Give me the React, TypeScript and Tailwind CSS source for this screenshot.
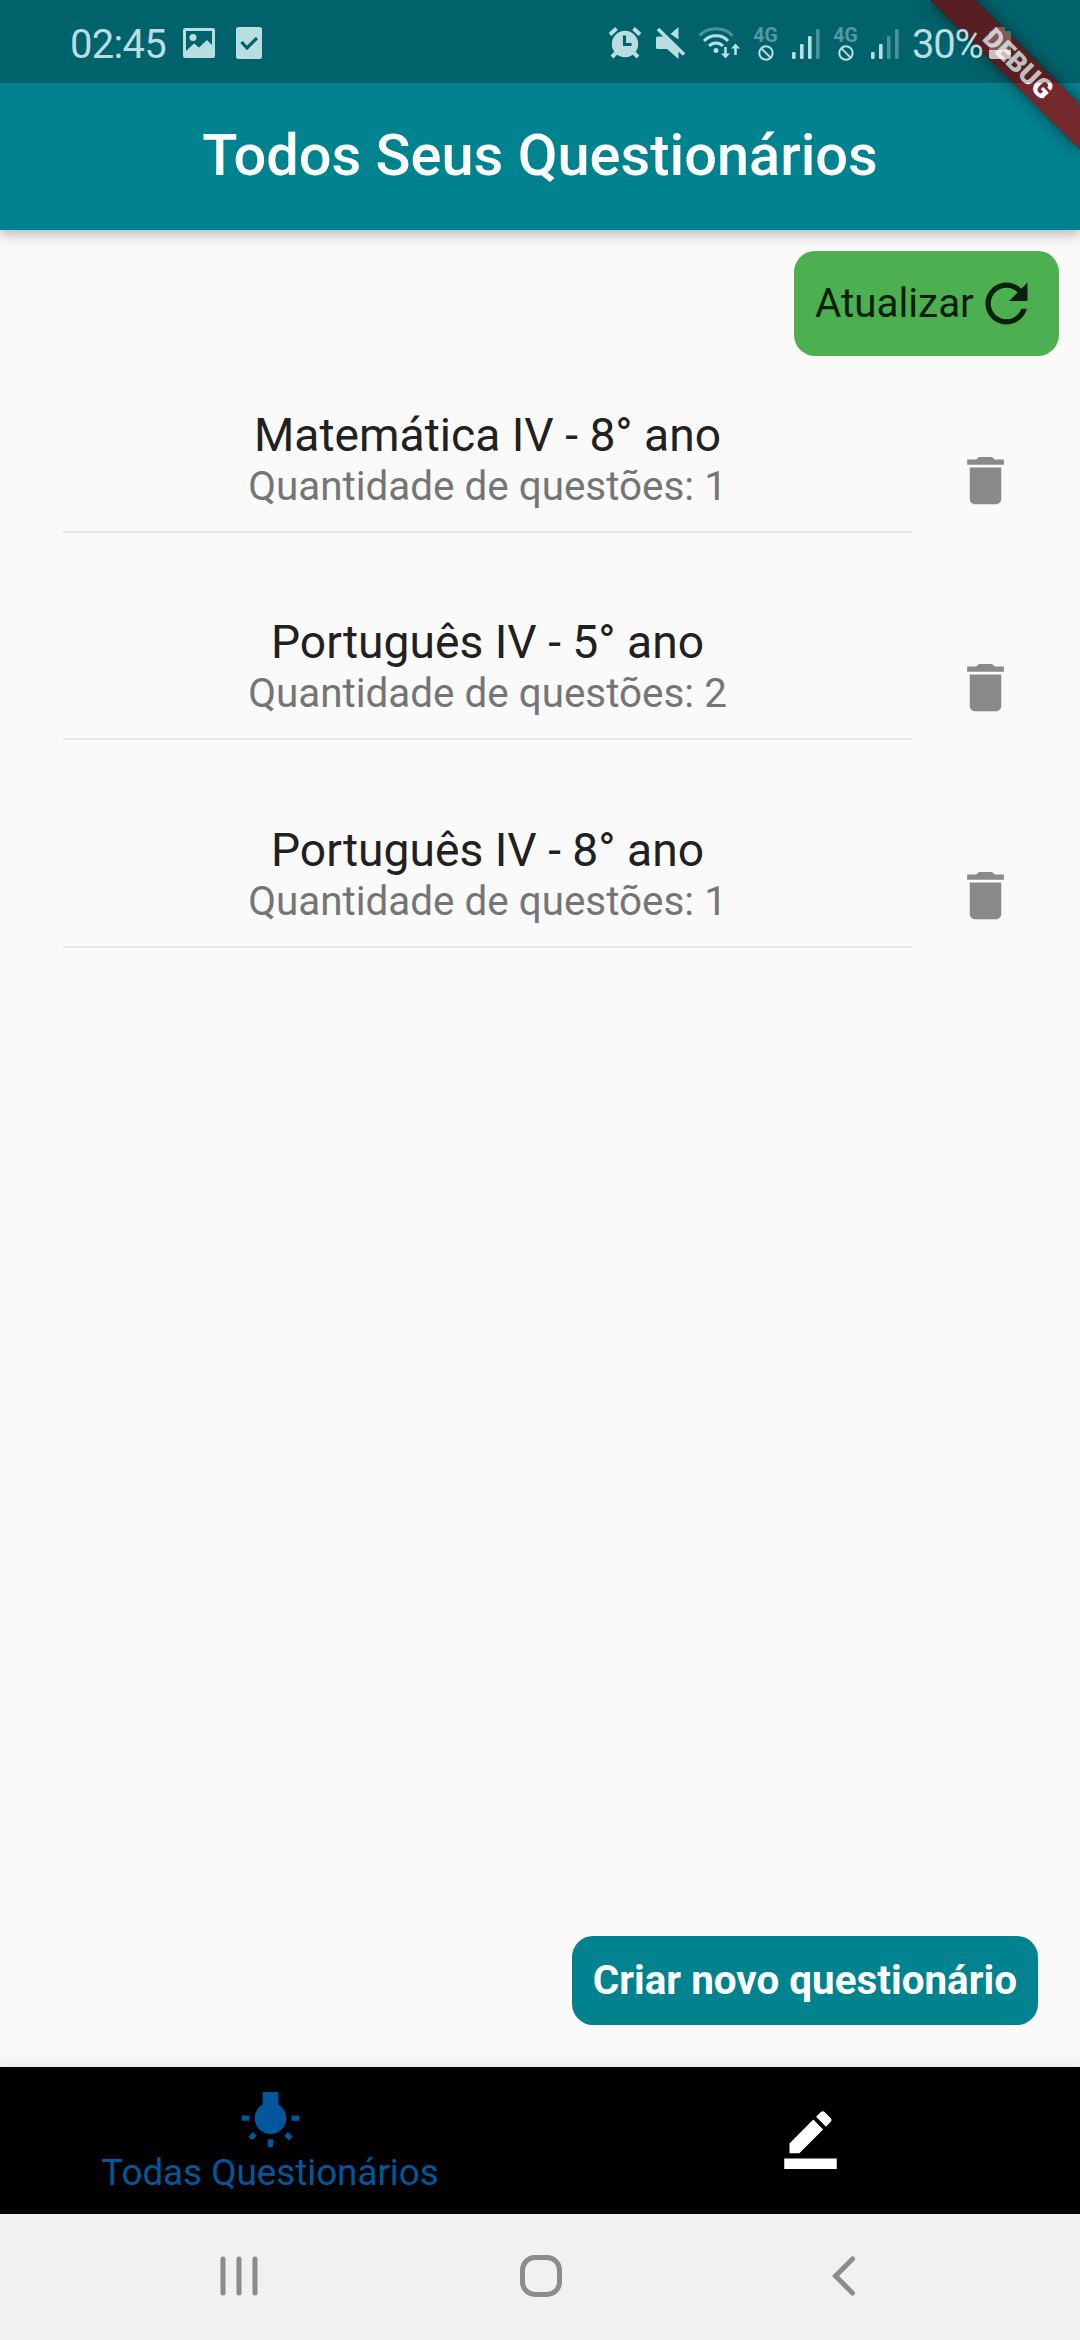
import type { ReactNode } from 'react'

interface Questionnaire {
  id: string
  title: string
  questions: number
}

const questionnaires: Questionnaire[] = [
  { id: 'mat-8', title: 'Matemática IV - 8° ano', questions: 1 },
  { id: 'port-5', title: 'Português IV - 5° ano', questions: 2 },
  { id: 'port-8', title: 'Português IV - 8° ano', questions: 1 }
]

function MaterialIcon({ d, className = '' }: { d: string; className?: string }) {
  return (
    <svg viewBox="0 0 24 24" fill="currentColor" className={`block size-[63px] shrink-0 ${className}`}>
      <path d={d} />
    </svg>
  )
}

const REFRESH =
  'M17.65 6.35C16.2 4.9 14.21 4 12 4c-4.42 0-7.99 3.58-7.99 8s3.57 8 7.99 8c3.73 0 6.84-2.55 7.73-6h-2.08c-.82 2.33-3.04 4-5.65 4-3.31 0-6-2.69-6-6s2.69-6 6-6c1.66 0 3.14.69 4.22 1.78L13 11h7V4l-2.35 2.35z'
const DELETE = 'M6 19c0 1.1.9 2 2 2h8c1.1 0 2-.9 2-2V7H6v12zM19 4h-3.5l-1-1h-5l-1 1H5v2h14V4z'
const BULB =
  'M3.55 18.54l1.41 1.41 1.8-1.79-1.41-1.41-1.8 1.79zM11 22.45h2V19.5h-2v2.95zM4 10.5H1v2h3v-2zm11-4.19V1.5H9v4.81C7.21 7.35 6 9.28 6 11.5c0 3.31 2.69 6 6 6s6-2.69 6-6c0-2.22-1.21-4.15-3-5.19zm5 4.19v2h3v-2h-3zm-2.76 7.66l1.79 1.8 1.41-1.41-1.8-1.79-1.4 1.4z'
const BORDER_COLOR =
  'M22 24H2v-4h20v4zM13.06 5.19l3.75 3.75L7.75 18H4v-3.75l9.06-9.06zM17.88 7.87l-3.75-3.75 1.83-1.83c.39-.39 1.02-.39 1.41 0l2.34 2.34c.39.39.39 1.02 0 1.41l-1.83 1.83z'

function NoData() {
  return (
    <div className="flex w-[25px] shrink-0 flex-col items-center">
      <span className="text-[19.5px] leading-[17px] font-bold text-white/35">4G</span>
      <svg viewBox="0 0 16 16" className="mt-[1px] block size-[16px]" fill="none" stroke="currentColor" strokeWidth="2">
        <circle cx="8" cy="8" r="6.7" />
        <path d="M3.4 3.4l9.2 9.2" />
      </svg>
    </div>
  )
}

function Signal({ level }: { level: number }) {
  const bars = [7, 15, 23, 30]
  return (
    <svg viewBox="0 0 28 30" className="block h-[30px] w-[28px] shrink-0" fill="currentColor">
      {bars.map((h, i) => (
        <rect key={h} x={i * 8} y={30 - h} width="3.6" height={h} rx="1.2" opacity={i < level ? 1 : 0.4} />
      ))}
    </svg>
  )
}

function StatusBar() {
  return (
    <div className="absolute inset-x-0 top-0 z-20 flex h-[83px] items-start bg-black/25 text-[#b9dee2]">
      <span className="mt-[21px] ml-[70px] w-[100px] text-[40px] leading-[47px] tracking-[-0.7px]">02:45</span>
      <svg viewBox="0 0 32 30" className="mt-[28px] ml-[13px] block h-[30px] w-[32px]">
        <path
          fill="currentColor"
          fillRule="evenodd"
          d="M2 0h28a2 2 0 0 1 2 2v26a2 2 0 0 1-2 2H2a2 2 0 0 1-2-2V2a2 2 0 0 1 2-2zM3 3v20l8-7.500 5 4L24 12l5 5V3z"
        />
        <circle cx="10" cy="9.500" r="3.500" fill="currentColor" />
      </svg>
      <svg viewBox="0 0 26 32" className="mt-[27px] ml-[21px] block h-[32px] w-[26px]">
        <rect width="26" height="32" rx="2.500" fill="currentColor" />
        <path d="M5.500 15l5.500 6L21 11" fill="none" stroke="#02626b" strokeWidth="3.200" />
      </svg>

      {/* alarm */}
      <svg viewBox="0 0 34 34" className="mt-[26px] ml-[346px] block size-[34px] shrink-0">
        <g fill="none" stroke="currentColor" strokeWidth="4">
          <path d="M2 8.500l6.500-6M32 8.500l-6.500-6M8 27l-4 4M26 27l4 4" />
        </g>
        <circle cx="17" cy="18" r="13.200" fill="currentColor" />
        <path d="M16.500 9.500v9h7" fill="none" stroke="#02626b" strokeWidth="3.200" />
      </svg>
      {/* muted */}
      <svg viewBox="0 0 30 32" className="mt-[27px] ml-[14px] block h-[32px] w-[30px] shrink-0" fill="currentColor">
        <path d="M22.500 0v12.500L14.500 7z" />
        <path d="M1.500 9.500h6L22.500 23v9L11 22H1.500A1.500 1.500 0 0 1 0 20.500V11a1.500 1.500 0 0 1 1.500-1.500z" />
        <path d="M2 2l26 25.500" stroke="currentColor" strokeWidth="3.600" />
      </svg>
      {/* wifi */}
      <svg
        viewBox="0 0 42 32"
        className="mt-[27px] ml-[12px] block h-[32px] w-[42px] shrink-0"
        fill="none"
        stroke="currentColor"
        strokeWidth="3"
      >
        <path d="M1.500 8.500C10-.5 26-.5 34.500 8.500" opacity="0.400" />
        <path d="M6 14c6-7 18.500-7 24 0M11 19c4-4 10-4 14 0" />
        <circle cx="18" cy="23.500" r="2.500" fill="currentColor" stroke="none" />
        <path d="M27.500 20v9M37.500 28V19" strokeWidth="2.600" />
        <path d="M23 26.500h9L27.500 31.500zM33 21.500h9L37.500 16.500z" fill="currentColor" stroke="none" />
      </svg>
      <div className="mt-[27px] ml-[13px] flex">
        <NoData />
      </div>
      <div className="mt-[29px] ml-[14px]">
        <Signal level={3} />
      </div>
      <div className="mt-[27px] ml-[13px] flex">
        <NoData />
      </div>
      <div className="mt-[29px] ml-[13px]">
        <Signal level={2} />
      </div>
      <span className="mt-[21px] ml-[13px] w-[75px] text-[40px] leading-[47px] tracking-[-1.2px]">30%</span>
      {/* battery, charge level in the lower part */}
      <svg viewBox="0 0 22 32" className="mt-[27px] ml-[2px] block h-[32px] w-[22px] shrink-0" fill="#fff">
        <path d="M6 0h10v4h4a2 2 0 0 1 2 2v18H0V6a2 2 0 0 1 2-2h4z" opacity="0.250" />
        <path d="M0 23h22v7a2 2 0 0 1-2 2H2a2 2 0 0 1-2-2z" opacity="0.700" />
      </svg>
    </div>
  )
}

function DebugBanner() {
  return (
    <div className="absolute top-0 right-0 z-10 size-[230px] overflow-hidden">
      <div className="absolute top-[73.5px] left-[125px] h-[31.5px] w-[210px] origin-[105px_-73.5px] rotate-45 bg-black/50 shadow-[0_0_16px_rgba(0,0,0,0.5)]">
        <div className="flex h-full items-center justify-center bg-[#b71c1c]/63 pl-[2px] text-[27px] leading-none font-black text-white">
          DEBUG
        </div>
      </div>
    </div>
  )
}

function QuestionnaireRow({ item }: { item: Questionnaire }) {
  return (
    <li className="flex h-[147px] items-end">
      <div className="flex h-[147px] w-[849px] flex-col items-center border-b-2 border-[#e6e6e6] pt-[22px]">
        <span className="text-[46.2px] leading-[54px] text-[#212121]">{item.title}</span>
        <span className="mt-px text-[40.4px] leading-[47px] text-[#757575]">
          Quantidade de questões: {item.questions}
        </span>
      </div>
      <button className="mb-[21px] ml-[42px] text-[#8a8a8a]">
        <MaterialIcon d={DELETE} />
      </button>
    </li>
  )
}

function NavTab({ children }: { children: ReactNode }) {
  return <button className="flex flex-1 flex-col items-center">{children}</button>
}

function SystemNav() {
  return (
    <div className="flex h-[126px] shrink-0 items-center bg-[#f1f1f1] pb-[2px] text-[#8c8c8c]">
      <svg viewBox="0 0 38 40" className="ml-[220px] block h-[40px] w-[38px]" stroke="currentColor" strokeWidth="5" strokeLinecap="round">
        <path d="M3 3v34M19 3v34M35 3v34" />
      </svg>
      <div className="ml-[262px] size-[42px] rounded-[15px] border-[5px] border-[#8c8c8c]" />
      <svg
        viewBox="0 0 24 40"
        className="ml-[270px] block h-[40px] w-[24px]"
        fill="none"
        stroke="currentColor"
        strokeWidth="5"
        strokeLinecap="round"
      >
        <path d="M20.500 3L3.500 20l17 17" />
      </svg>
    </div>
  )
}

export default function App() {
  return (
    <div className="relative flex h-[2340px] w-[1080px] flex-col overflow-hidden bg-[#fafafa] font-['Roboto',sans-serif]">
      <StatusBar />
      <DebugBanner />

      <header className="flex h-[230px] shrink-0 items-center justify-center bg-[#00838f] pt-[83px] pb-[4px] shadow-[0_5px_12px_rgba(0,0,0,0.25)]">
        <h1 className="text-[57.75px] leading-[68px] font-medium text-white">Todos Seus Questionários</h1>
      </header>

      <main className="flex flex-1 flex-col">
        <button className="mt-[21px] mr-[21px] flex h-[105px] items-center self-end rounded-[21px] bg-[#4caf50] px-[21px] text-[40.4px] text-[#0b1f0c]">
          <span className="w-[160px] text-left leading-[47px]">Atualizar</span>
          <MaterialIcon d={REFRESH} />
        </button>

        <ul className="mt-[30px] ml-[63px] flex flex-col gap-[60.3px]">
          {questionnaires.map((item) => (
            <QuestionnaireRow key={item.id} item={item} />
          ))}
        </ul>

        <button className="mt-auto mr-[42px] mb-[42px] flex h-[89px] items-center self-end rounded-[21px] bg-[#00838f] px-[21px] text-[40.4px] leading-[47px] font-bold text-white">
          Criar novo questionário
        </button>
      </main>

      <nav className="flex h-[147px] shrink-0 bg-black shadow-[0_-4px_14px_rgba(0,0,0,0.08)]">
        <NavTab>
          <MaterialIcon d={BULB} className="mt-[21px] text-[#01579b]" />
          <span className="text-[36.75px] leading-[43px] text-[#01579b]">Todas Questionários</span>
        </NavTab>
        <NavTab>
          <MaterialIcon d={BORDER_COLOR} className="mt-[39px] text-white" />
        </NavTab>
      </nav>

      <SystemNav />
    </div>
  )
}
